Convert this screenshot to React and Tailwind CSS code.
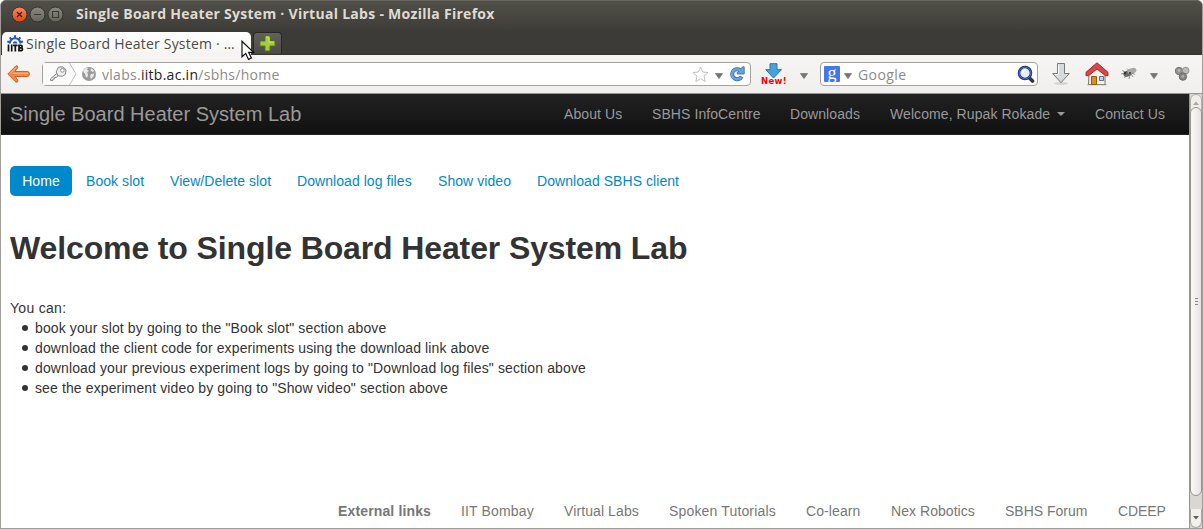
import React from "react";

function Caret({ className = "" }) {
  return (
    <svg className={"shrink-0 " + className} width="8" height="6" viewBox="0 0 8 6">
      <path d="M.4.5h7.2L4 5.6z" fill="#777572" stroke="#686663" strokeWidth=".6" />
    </svg>
  );
}

function TitleBar() {
  return (
    <div className="flex h-[30px] shrink-0 items-center rounded-t-md border-t border-[#68675f] bg-linear-to-b from-[#504f48] to-[#3e3d38] pb-[2px] pl-[10px]">
      <svg width="53" height="18" viewBox="0 0 53 18" className="shrink-0">
        <defs>
          <linearGradient id="close" x1="0" y1="0" x2="0" y2="1">
            <stop offset="0" stopColor="#f58a60" />
            <stop offset="1" stopColor="#dd4814" />
          </linearGradient>
          <linearGradient id="btn" x1="0" y1="0" x2="0" y2="1">
            <stop offset="0" stopColor="#8b897f" />
            <stop offset="1" stopColor="#66645c" />
          </linearGradient>
        </defs>
        <circle cx="8.5" cy="8.5" r="7.5" fill="url(#close)" stroke="#34332f" />
        <circle cx="26.5" cy="8.5" r="7.5" fill="url(#btn)" stroke="#34332f" />
        <circle cx="44.5" cy="8.5" r="7.5" fill="url(#btn)" stroke="#34332f" />
        <path d="M6 6l5 5M11 6l-5 5" stroke="#4b1b0a" strokeWidth="1.3" />
        <path d="M23 8.5h7M41.5 5.5h6v6h-6z" stroke="#393833" fill="none" strokeWidth="1.1" />
      </svg>
      <span className="-mt-px ml-[12px] whitespace-nowrap font-['Open_Sans',sans-serif] text-[14px] font-bold leading-[20px] tracking-[0.28px] text-[#dfdbd2]">
        Single Board Heater System · Virtual Labs - Mozilla Firefox
      </span>
    </div>
  );
}

function GearLogo() {
  return (
    <svg width="17" height="17" viewBox="0 0 17 17" className="shrink-0">
      <path d="M2.8 8.5a5.3 5.3 0 0 1 10.6 0" fill="none" stroke="#2455c4" strokeWidth="2" />
      <path d="M8.1 3.5V.3M4.5 4.7L2.8 2.3M11.7 4.7l1.7-2.4M2.9 7.3L.3 6.5M13.3 7.3l2.6-.8" stroke="#2455c4" strokeWidth="2" />
      <path d="M5.8 8.5a2.3 2.3 0 0 1 4.6 0z" fill="#2455c4" />
      <path d="M1.5 9.5v7M4.7 9.5v7M6 10.3h4.6M8.3 9.5v7M12 9.5v7M12 10.3h1.9q1.2 0 1.2 1.3t-1.2 1.3H12h2.2q1.3 0 1.3 1.4t-1.3 1.4H12" fill="none" stroke="#111" strokeWidth="1.7" />
    </svg>
  );
}

function TabStrip() {
  return (
    <div className="flex h-[25px] shrink-0 items-end border-b border-[#343330] bg-[#3c3b37] pl-px">
      <div className="relative -mb-px flex h-[23px] w-[249px] items-center rounded-t-[5px] bg-linear-to-b from-white to-[#f5f4f3] pl-[5px]">
        <GearLogo />
        <span className="ml-[2px] whitespace-nowrap font-['Open_Sans',sans-serif] text-[14px] leading-[20px] tracking-[0.2px] text-[#4b4a47]">
          Single Board Heater System · …
        </span>
        <svg className="absolute left-[239px] top-[8px] z-10" width="14" height="21" viewBox="0 0 14 21">
          <path d="M1 1.2v15.6l3.7-3.4 2.8 6 2.9-1.4-2.8-5.7h4.9z" fill="#fff" stroke="#111" strokeWidth="1.2" />
        </svg>
      </div>
      <div className="ml-[2px] flex h-[22px] w-[29px] items-center justify-center rounded-t-[4px] border border-b-0 border-[#292825] bg-linear-to-b from-[#62615c] to-[#4b4a45] pr-px">
        <svg width="17" height="17" viewBox="0 0 17 17">
          <path d="M6 1h5v5h5v5h-5v5H6v-5H1V6h5z" fill="#a6ca43" stroke="#54761b" />
          <path d="M7 2h3v5h5" fill="none" stroke="#d3e67f" />
        </svg>
      </div>
    </div>
  );
}

function Toolbar() {
  return (
    <div className="flex h-[39px] shrink-0 items-center border-b border-[#989692] bg-linear-to-b from-[#f6f5f4] to-[#f0efee] pl-[6px] font-['Open_Sans',sans-serif] text-[14px] leading-[20px]">
      <svg width="24" height="20" viewBox="0 0 24 20" className="shrink-0">
        <path d="M.8 10L9 1.8q2.2-.5 1.7 2L7.8 7.5h12.8q2 .3 1.8 2.6-.1 2.2-2 2.4H8l2.8 3.7q.4 2.3-1.8 2z" fill="#f18a49" stroke="#d55b20" />
        <path d="M3 9.5L9 3.5M6 9.2h15" stroke="#f9bc8d" />
      </svg>
      <div className="ml-[11px] flex h-[24px] w-[709px] shrink-0 items-center rounded-[4px] border border-[#a5a29e] bg-white">
        <svg width="60" height="22" viewBox="0 0 60 22" className="shrink-0">
          <path d="M0 0h27l7 11-7 11H0z" fill="#fafafa" />
          <path d="M26.5 0l6.5 11-6.5 11" fill="none" stroke="#c4c2bf" />
          <path d="M13.8 10.5l-6.2 5.2v1.8h2.3v-1.4h1.5v-1.5H13l3-2.6" fill="#e8e8e8" stroke="#898989" />
          <path d="M15.4 4.2l4.4-.4 3.3 3-.7 4.5-3.1 2-4.1-.5-2-3.8z" fill="#eee" stroke="#858585" />
          <circle cx="19.4" cy="7.3" r="1.9" fill="#fff" stroke="#8b8b8b" />
          <circle cx="46" cy="11" r="7" fill="#999" />
          <path d="M40 8q2-3.5 5-3.3l-1 2 2 1-2 2 1.2 2-1.2 3q-2-1-1.7-3zM48 5l3.5 3-2 1-2-1.5zM48 11l3.4-.4-1 3-2.4 2.5-1-2.5z" fill="#e8e8e8" />
        </svg>
        <span className="-ml-px mt-px whitespace-nowrap tracking-[0.28px] text-[#8d8b89]">
          vlabs.<span className="text-[#222]">iitb.ac.in</span>/sbhs/home
        </span>
        <svg width="17" height="17" viewBox="0 0 17 17" className="ml-auto shrink-0">
          <path d="M8.5 1l2.2 5 5.3.5-4 3.6 1.2 5.4-4.7-2.8-4.7 2.8L5 10.1 1 6.5 6.3 6z" fill="#fff" stroke="#c1c1c1" />
        </svg>
        <Caret className="ml-[6px] mt-1" />
        <svg width="16" height="16" viewBox="0 0 16 16" className="ml-[6px] mr-[5px] shrink-0">
          <path d="M11.1 4.2A5 5 0 1 0 12.6 10.5" fill="none" stroke="#3976b6" strokeWidth="4" />
          <path d="M8.2 8V6.6l2-1.6L13.6.8h1.6V8z" fill="#6ba2d8" stroke="#3976b6" strokeWidth=".9" />
          <path d="M11.4 4.6A5 5 0 1 0 12.3 10.8" fill="none" stroke="#6ba2d8" strokeWidth="2.4" />
        </svg>
      </div>
      <div className="relative ml-[8px] h-[22px] w-[30px] shrink-0">
        <svg width="18" height="18" viewBox="0 0 18 18" className="ml-[6px]">
          <path d="M5 .7h7v6h4.5L8.5 15 .8 6.7H5z" fill="#45a3d7" stroke="#2877a4" />
        </svg>
        <span className="absolute left-[2px] top-[13px] font-['DejaVu_Sans',sans-serif] text-[8.5px] font-bold leading-[10px] tracking-[0.3px] text-[#f00]">New!</span>
      </div>
      <Caret className="ml-[11px] mt-1" />
      <div className="ml-[12px] flex h-[24px] w-[218px] shrink-0 items-center rounded-[4px] border border-[#a5a29e] bg-white pl-[3px] pr-[2px]">
        <div className="flex h-[16px] w-[16px] items-center justify-center rounded-[1px] bg-[#4477ee] pb-[3px] font-['Liberation_Serif',serif] text-[18px] leading-[16px] text-white">g</div>
        <Caret className="ml-[4px] mt-1" />
        <span className="ml-[6px] mt-px tracking-[0.4px] text-[#8d8b89]">Google</span>
        <svg width="18" height="18" viewBox="0 0 18 18" className="ml-auto shrink-0">
          <path d="M11.5 12l4 4" stroke="#333" strokeWidth="3.6" strokeLinecap="round" />
          <circle cx="8" cy="8" r="6" fill="#e3ecf8" stroke="#1f3b8b" strokeWidth="2.6" />
          <circle cx="8" cy="8" r="5.8" fill="none" stroke="#5a7bd0" strokeWidth=".7" />
          <path d="M6 8q0-3 3-3" fill="none" stroke="#fff" strokeWidth="1.5" />
        </svg>
      </div>
      <svg width="20" height="24" viewBox="0 0 20 24" className="ml-[13px] shrink-0">
        <ellipse cx="10" cy="21.5" rx="7" ry="1.5" fill="#d4d4d2" />
        <path d="M6.5 1.5h7v10h4.8L10 20.7 1.7 11.5h4.8z" fill="#d7dadb" stroke="#777b7c" />
        <path d="M7.5 2.5v10H4" fill="none" stroke="#fff" />
      </svg>
      <svg width="24" height="24" viewBox="0 0 24 24" className="ml-[14px] shrink-0">
        <path d="M4 11l8-8 8 8v11.5H3.5z" fill="#f2f1ee" stroke="#777" />
        <path d="M2.5 22.7h19" stroke="#898987" />
        <path d="M6.5 14.5h5v8h-5z" fill="#d9901c" stroke="#8b5b0e" />
        <path d="M14.5 14.5h4v4h-4z" fill="#c0d5e5" stroke="#656d73" />
        <path d="M12 .8L1 10.3v3.4h2.5L12 7l8.5 6.7H23v-3.4z" fill="#d74747" stroke="#a92b2b" />
      </svg>
      <svg width="18" height="18" viewBox="0 0 18 18" className="-mt-px ml-[12px] shrink-0">
        <ellipse cx="6.8" cy="8.5" rx="4.6" ry="3" fill="#6a6a68" transform="rotate(-22 6.8 8.5)" />
        <ellipse cx="11" cy="6" rx="4.6" ry="2.8" fill="#aaa9a7" transform="rotate(-20 11 6)" />
        <path d="M1 5.5l3 1.5M0 9l4-1M3.5 13l2-3M8 14l1-4M12 12l-2-3M14 9.5l-3-1.5M6 3.5l2 2" stroke="#777" strokeWidth=".8" />
        <circle cx="4" cy="8" r="1.2" fill="#333" />
        <circle cx="9" cy="8" r="1.1" fill="#333" />
      </svg>
      <Caret className="ml-[11px] mt-1" />
      <svg width="16" height="16" viewBox="0 0 16 16" className="ml-[16px] shrink-0">
        <circle cx="5" cy="5" r="3.7" fill="#929292" stroke="#777" />
        <circle cx="11.7" cy="4.6" r="3.3" fill="#bbb" stroke="#929292" />
        <circle cx="8.9" cy="10.6" r="3.7" fill="#828282" stroke="#6c6c6c" />
        <circle cx="8.9" cy="10.2" r="1.5" fill="#aaa" />
        <circle cx="5" cy="4.5" r="1.3" fill="#bbb" />
      </svg>
    </div>
  );
}

function Scrollbar() {
  return (
    <div className="flex w-[13px] shrink-0 flex-col border-l border-[#999692] bg-[#d9d7d4]">
      <div className="flex h-[17px] items-center justify-center rounded-t-[6px] border border-[#b4b1ad] bg-[#eeedeb]">
        <svg width="6" height="4" viewBox="0 0 6 4"><path d="M0 4h6L3 .5z" fill="#aaa8a5" /></svg>
      </div>
      <div className="-mt-[4px] flex h-[389px] flex-col items-center justify-center gap-[2px] rounded-[6px] border border-[#96938f] bg-linear-to-r from-[#f9f9f8] to-[#e6e4e2]">
        <div className="h-px w-[3px] bg-[#888]" />
        <div className="h-px w-[3px] bg-[#888]" />
        <div className="h-px w-[3px] bg-[#888]" />
      </div>
      <div className="mt-[13px] flex flex-1 items-center justify-center rounded-b-[6px] border border-t-0 border-[#aaa7a3] bg-[#f1f0ee]">
        <svg width="6" height="4" viewBox="0 0 6 4"><path d="M0 0h6L3 3.5z" fill="#62605d" /></svg>
      </div>
    </div>
  );
}

const tasks = [
  'book your slot by going to the "Book slot" section above',
  "download the client code for experiments using the download link above",
  'download your previous experiment logs by going to "Download log files" section above',
  'see the experiment video by going to "Show video" section above',
];

function Page() {
  return (
    <main className="flex min-w-0 flex-1 flex-col bg-white font-['Liberation_Sans',Arial,sans-serif] text-[14px] leading-[20px] text-[#333]">
      <nav className="flex h-[41px] shrink-0 items-center border-b border-[#252525] bg-linear-to-b from-[#222] to-[#111] pl-[9px] pr-[24px] text-[#999]">
        <span className="text-[20px]">Single Board Heater System Lab</span>
        <div className="ml-auto flex gap-[30px] whitespace-nowrap tracking-[0.08px]">
          <span className="w-[58px]">About Us</span>
          <span className="w-[108px]">SBHS InfoCentre</span>
          <span className="w-[70px]">Downloads</span>
          <span className="flex w-[175px] items-center justify-between">
            Welcome, Rupak Rokade
            <svg width="8" height="4" viewBox="0 0 8 4"><path d="M0 0h8L4 4z" fill="#999" /></svg>
          </span>
          <span className="w-[70px]">Contact Us</span>
        </div>
      </nav>
      <div className="ml-[9px] mt-[31px] flex h-[30px] shrink-0 items-center gap-[26px] whitespace-nowrap tracking-[0.06px] text-[#0088cc]">
        <span className="-mr-[12px] w-[62px] rounded-[5px] bg-[#0088cc] py-[5px] text-center text-white">Home</span>
        <span className="w-[58px]">Book slot</span>
        <span className="w-[101px]">View/Delete slot</span>
        <span className="w-[115px]">Download log files</span>
        <span className="w-[73px]">Show video</span>
        <span>Download SBHS client</span>
      </div>
      <h1 className="ml-[9px] mt-[32px] whitespace-nowrap text-[32px] font-bold leading-[40px] tracking-[-0.12px]">Welcome to Single Board Heater System Lab</h1>
      <div className="ml-[9px] mt-[30px] tracking-[0.12px]">
        <p className="tracking-[0.3px]">You can:</p>
        <ul>
          {tasks.map((task) => (
            <li key={task} className="flex items-center">
              <span className="ml-[12px] mr-[7px] h-[6px] w-[6px] rounded-full bg-[#333]" />
              {task}
            </li>
          ))}
        </ul>
      </div>
      <footer className="mb-[7px] mt-auto flex justify-end gap-[30px] whitespace-nowrap pr-[24px] text-[#777]">
        <b className="w-[93px] tracking-[0.14px]">External links</b>
        <span className="w-[73px] tracking-[0.15px]">IIT Bombay</span>
        <span className="w-[75px] tracking-[0.1px]">Virtual Labs</span>
        <span className="w-[107px] tracking-[0.16px]">Spoken Tutorials</span>
        <span className="w-[55px] tracking-[0.1px]">Co-learn</span>
        <span className="w-[84px] tracking-[0.05px]">Nex Robotics</span>
        <span className="w-[83px] tracking-[0px]">SBHS Forum</span>
        <span className="w-[47px] tracking-[-0.1px]">CDEEP</span>
      </footer>
    </main>
  );
}

export default function App() {
  return (
    <div className="h-[529px] w-[1203px] overflow-hidden bg-white">
      <div className="flex h-full flex-col overflow-hidden rounded-t-md border-b border-l border-r border-[#a19d98] bg-[#3c3b37]">
        <TitleBar />
        <TabStrip />
        <Toolbar />
        <div className="flex min-h-0 flex-1">
          <Page />
          <Scrollbar />
        </div>
      </div>
    </div>
  );
}
